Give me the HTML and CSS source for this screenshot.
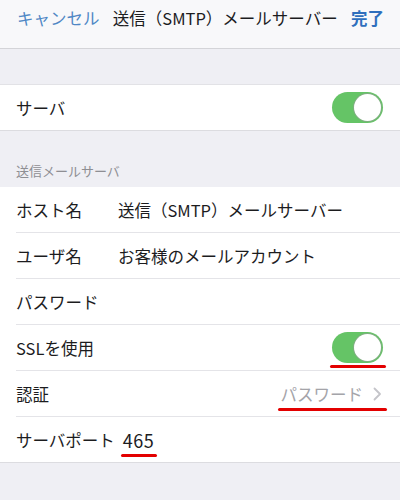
FILE: index.html
```html
<!DOCTYPE html>
<html lang="ja">
<head>
  <meta charset="UTF-8" />
  <title>送信（SMTP）メールサーバー</title>
  <link rel="stylesheet" href="styles.css">
</head>
<body>

  <header class="nav">
    <span class="nav-cancel">キャンセル</span>
    <span class="nav-title">送信（SMTP）メールサーバー</span>
    <span class="nav-done">完了</span>
  </header>

  <div class="spacer"></div>

  <div class="group">
    <div class="row">
      <span class="label">サーバ</span>
      <span class="switch"><span class="knob"></span></span>
    </div>
  </div>

  <div class="section-title">送信メールサーバ</div>

  <div class="group">
    <div class="row">
      <span class="label">ホスト名</span>
      <span class="value">送信（SMTP）メールサーバー</span>
    </div>
    <div class="row">
      <span class="label">ユーザ名</span>
      <span class="value">お客様のメールアカウント</span>
    </div>
    <div class="row">
      <span class="label">パスワード</span>
    </div>
    <div class="row">
      <span class="label">SSLを使用</span>
      <span class="switch marked"><span class="knob"></span></span>
    </div>
    <div class="row">
      <span class="label">認証</span>
      <span class="detail marked">
        パスワード
        <svg class="chevron" width="9" height="14" viewBox="0 0 9 14">
          <path d="M1.5 1.5 L7 7 L1.5 12.5" fill="none" stroke="#c4c4c9" stroke-width="1.8" stroke-linecap="round" stroke-linejoin="round"/>
        </svg>
      </span>
    </div>
    <div class="row">
      <span class="label">サーバポート</span>
      <span class="value port marked">465</span>
    </div>
  </div>

</body>
</html>
```

FILE: styles.css
```css
body {
  font-family: "Noto Sans CJK JP", "Noto Sans", sans-serif;
  background-color: #efeff4;
  color: #1c1c1e;
  margin: 0;
  padding: 0;
}

.nav {
  height: 42px;
  display: flex;
  justify-content: space-between;
  align-items: flex-start;
  padding: 6px 16px 0 17px;
  background-color: #f8f8fa;
  border-bottom: 1px solid #d4d4d8;
  font-size: 16.5px;
  line-height: 24px;
}

.nav-cancel {
  color: #4f87c5;
}

.nav-title {
  color: #1c1c1e;
}

.nav-done {
  color: #2f6fbd;
  font-weight: bold;
}

.spacer {
  height: 35px;
}

.group {
  background: #fff;
  border-top: 1px solid #e2e2e6;
  border-bottom: 1px solid #dcdce0;
}

.row {
  height: 45px;
  margin-left: 16px;
  padding-right: 17px;
  display: flex;
  align-items: center;
  border-bottom: 1px solid #e4e4e8;
  font-size: 16.5px;
}

.row:last-child {
  border-bottom: none;
}

.label {
  min-width: 97px;
  margin-right: 5px;
}

.value {
  color: #1c1c1e;
}

.port {
  margin-left: 3px;
  font-size: 18px;
  letter-spacing: 0.5px;
}

.section-title {
  height: 56px;
  box-sizing: border-box;
  padding: 0 16px 7px;
  display: flex;
  align-items: flex-end;
  font-size: 13px;
  color: #8e8e93;
}

.section-title + .group {
  border-top: none;
}

.switch {
  margin-left: auto;
  width: 51px;
  height: 31px;
  border-radius: 16px;
  background: #65c466;
  box-sizing: border-box;
  display: flex;
  justify-content: flex-end;
  align-items: center;
  padding: 2px;
}

.knob {
  width: 27px;
  height: 27px;
  border-radius: 50%;
  background: #fff;
  box-shadow: 0 0 0 1px #7fae80;
}

.detail {
  margin-left: auto;
  display: flex;
  align-items: center;
  gap: 10px;
  color: #a4a4a9;
}

.chevron {
  margin-right: 1px;
}

.marked {
  position: relative;
}

.marked::after {
  content: "";
  position: absolute;
  left: -2px;
  right: -3px;
  bottom: -5px;
  height: 3px;
  border-radius: 2px;
  background: #e30000;
}

.detail.marked::after {
  left: -3px;
  right: -4px;
}

.port.marked::after {
  bottom: -4px;
}
```
